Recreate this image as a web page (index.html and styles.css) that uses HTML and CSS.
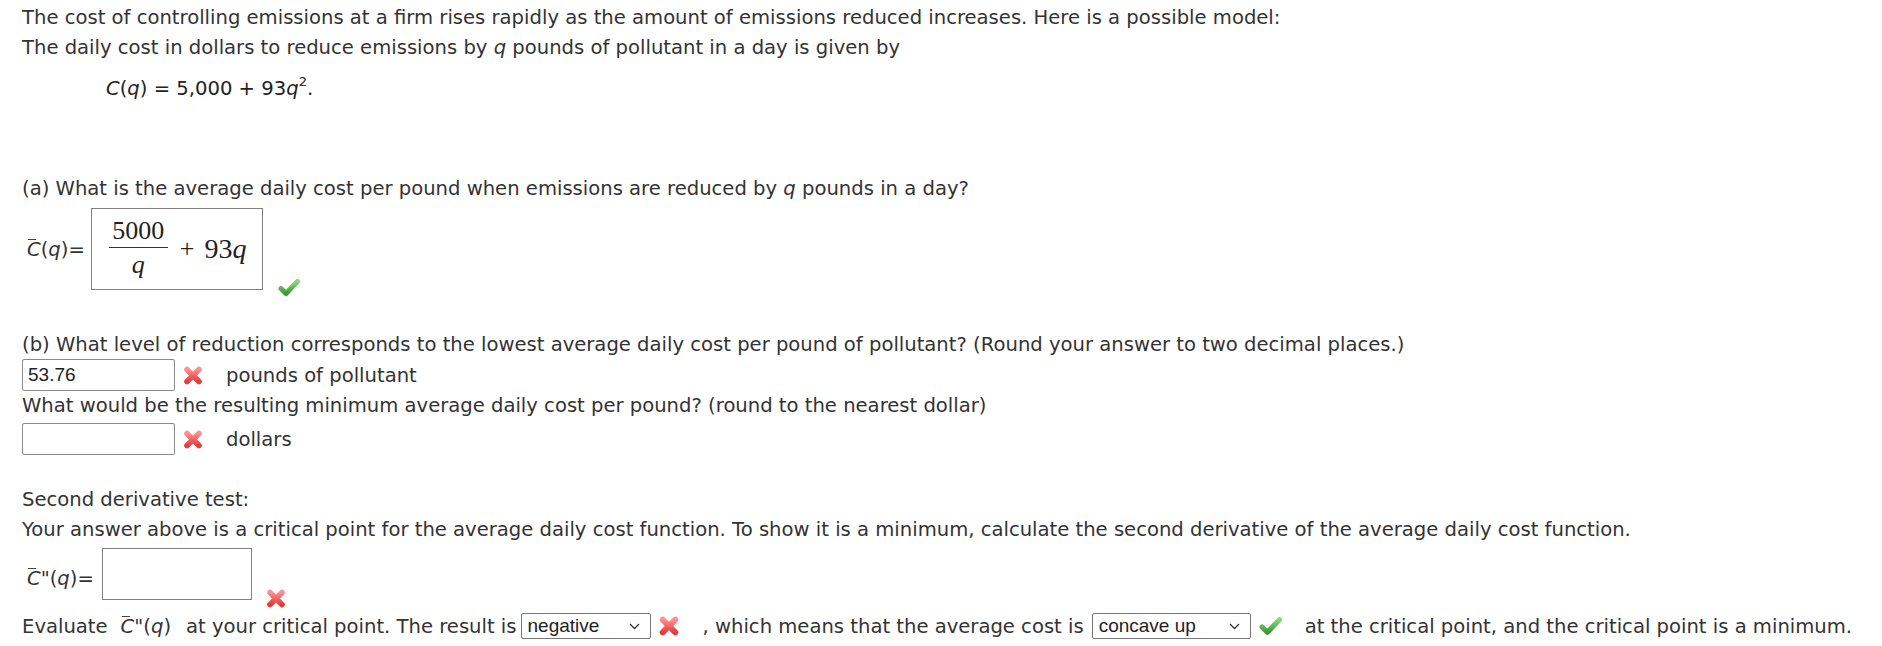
FILE: index.html
```html
<!DOCTYPE html>
<html>
<head>
<meta charset="utf-8">
<link rel="stylesheet" href="styles.css">
</head>
<body>
<div class="page">
  <p class="intro">The cost of controlling emissions at a firm rises rapidly as the amount of emissions reduced increases. Here is a possible model:<br>The daily cost in dollars to reduce emissions by <i>q</i> pounds of pollutant in a day is given by</p>
  <div class="formula"><i>C</i>(<i>q</i>) = 5,000 + 93<i>q</i><sup>2</sup>.</div>

  <p class="line qa">(a) What is the average daily cost per pound when emissions are reduced by <i>q</i> pounds in a day?</p>
  <div class="row-ans">
    <div class="grp grp-a">
      <span class="lbl"><span class="cbar">C</span>(<i>q</i>)=</span>
      <div class="mathbox mathbox-a">
        <span class="frac"><span class="num">5000</span><span class="den"><i>q</i></span></span>
        <span class="plus">+</span><span class="rest">93<i>q</i></span>
      </div>
    </div>
    <svg class="icon check check-a" width="22" height="19" viewBox="0 0 22 19"><defs><linearGradient id="g1" x1="0" y1="0" x2="0" y2="1"><stop offset="0" stop-color="#8ad77d"/><stop offset="1" stop-color="#3d9833"/></linearGradient></defs><polyline points="3,10.5 8,15.5 19.5,3.5" fill="none" stroke="url(#g1)" stroke-width="5" stroke-linecap="round" stroke-linejoin="round"/></svg>
  </div>

  <p class="line qb">(b) What level of reduction corresponds to the lowest average daily cost per pound of pollutant? (Round your answer to two decimal places.)</p>
  <div class="row-input">
    <div class="inbox">53.76</div>
    <svg class="icon cross" width="20" height="19" viewBox="0 0 20 19"><defs><linearGradient id="r1" x1="0" y1="0" x2="0" y2="1"><stop offset="0" stop-color="#ff9090"/><stop offset="1" stop-color="#e53a3a"/></linearGradient></defs><path d="M4 3.5 L16 15.5 M16 3.5 L4 15.5" stroke="url(#r1)" stroke-width="5.6" stroke-linecap="round"/></svg>
    <span class="unit">pounds of pollutant</span>
  </div>
  <p class="line qc">What would be the resulting minimum average daily cost per pound? (round to the nearest dollar)</p>
  <div class="row-input row-input2">
    <div class="inbox"></div>
    <svg class="icon cross" width="20" height="19" viewBox="0 0 20 19"><defs><linearGradient id="r2" x1="0" y1="0" x2="0" y2="1"><stop offset="0" stop-color="#ff9090"/><stop offset="1" stop-color="#e53a3a"/></linearGradient></defs><path d="M4 3.5 L16 15.5 M16 3.5 L4 15.5" stroke="url(#r2)" stroke-width="5.6" stroke-linecap="round"/></svg>
    <span class="unit">dollars</span>
  </div>

  <p class="line sd">Second derivative test:</p>
  <p class="line">Your answer above is a critical point for the average daily cost function. To show it is a minimum, calculate the second derivative of the average daily cost function.</p>
  <div class="row-ans row-c">
    <div class="grp grp-c">
      <span class="lbl"><span class="cbar">C</span>"(<i>q</i>)=</span>
      <div class="mathbox mathbox-c"></div>
    </div>
    <svg class="icon cross cross-c" width="20" height="19" viewBox="0 0 20 19"><defs><linearGradient id="r3" x1="0" y1="0" x2="0" y2="1"><stop offset="0" stop-color="#ff9090"/><stop offset="1" stop-color="#e53a3a"/></linearGradient></defs><path d="M4 3.5 L16 15.5 M16 3.5 L4 15.5" stroke="url(#r3)" stroke-width="5.6" stroke-linecap="round"/></svg>
  </div>
  <div class="row-eval">
    <span>Evaluate</span>
    <span class="expr"><span class="cbar">C</span>"(<i>q</i>)</span>
    <span class="t2">at your critical point. The result is</span>
    <span class="sel sel1"><span>negative</span><svg width="11" height="7" viewBox="0 0 11 7"><polyline points="1,1 5.5,5.5 10,1" fill="none" stroke="#333" stroke-width="1.3"/></svg></span>
    <svg class="icon cross cross-e" width="22" height="20" viewBox="0 0 20 19"><defs><linearGradient id="r4" x1="0" y1="0" x2="0" y2="1"><stop offset="0" stop-color="#ff9090"/><stop offset="1" stop-color="#e53a3a"/></linearGradient></defs><path d="M4 3.5 L16 15.5 M16 3.5 L4 15.5" stroke="url(#r4)" stroke-width="5.6" stroke-linecap="round"/></svg>
    <span class="t3">, which means that the average cost is</span>
    <span class="sel sel2"><span>concave up</span><svg width="11" height="7" viewBox="0 0 11 7"><polyline points="1,1 5.5,5.5 10,1" fill="none" stroke="#333" stroke-width="1.3"/></svg></span>
    <svg class="icon check check-e" width="23" height="20" viewBox="0 0 22 19"><defs><linearGradient id="g2" x1="0" y1="0" x2="0" y2="1"><stop offset="0" stop-color="#8ad77d"/><stop offset="1" stop-color="#3d9833"/></linearGradient></defs><polyline points="3,10.5 8,15.5 19.5,3.5" fill="none" stroke="url(#g2)" stroke-width="5" stroke-linecap="round" stroke-linejoin="round"/></svg>
    <span class="t4">at the critical point, and the critical point is a minimum.</span>
  </div>
</div>
</body>
</html>
```

FILE: styles.css
```css
html, body {
  margin: 0;
  padding: 0;
  background: #fff;
}
body {
  font-family: "DejaVu Sans", Verdana, sans-serif;
  font-size: 19.6px;
  color: #333;
}
.page {
  padding: 3px 0 0 22px;
}
p { margin: 0; }
.intro {
  line-height: 30px;
}
.formula {
  margin-top: 11px;
  line-height: 30px;
  padding-left: 84px;
  color: #222;
}
.formula sup {
  font-size: 13px;
  line-height: 0;
  vertical-align: 9px;
}
.line {
  line-height: 30px;
}
.qa { margin-top: 70px; }
.row-ans {
  display: flex;
  align-items: flex-end;
  margin-top: 4px;
}
.grp {
  display: flex;
  align-items: center;
}
.grp-a { margin-bottom: 7px; }
.lbl {
  margin-left: 5px;
  white-space: nowrap;
}
.cbar {
  position: relative;
  font-style: italic;
}
.cbar::before {
  content: "";
  position: absolute;
  left: 1px;
  top: 1px;
  width: 8px;
  height: 1.5px;
  background: #444;
}
.mathbox {
  border: 1px solid #808080;
  box-sizing: border-box;
  background: #fff;
}
.mathbox-a {
  margin-left: 6px;
  width: 172px;
  height: 82px;
  display: flex;
  align-items: center;
  padding-left: 17px;
  font-family: "Liberation Serif", "Times New Roman", serif;
  font-size: 26px;
  color: #222;
}
.frac {
  display: inline-flex;
  flex-direction: column;
  align-items: center;
  width: 59px;
  margin-bottom: 2px;
}
.num {
  line-height: 26px;
  padding-bottom: 3px;
  border-bottom: 1.3px solid #333;
  width: 100%;
  text-align: center;
}
.den {
  line-height: 26px;
  padding-top: 4px;
}
.plus { margin-left: 12px; }
.rest { margin-left: 10px; font-size: 28px; }
.check-a { margin-left: 15px; }
.qb { margin-top: 34px; line-height: 28px; }
.qc { margin-top: 1px; line-height: 28px; }
.row-input {
  display: flex;
  align-items: center;
  height: 32px;
}
.row-input2 { margin-top: 3px; }
.inbox {
  width: 153px;
  height: 32px;
  box-sizing: border-box;
  border: 1px solid #8a8a8a;
  border-radius: 2px;
  font-family: "Liberation Sans", Arial, sans-serif;
  font-size: 19px;
  line-height: 30px;
  padding-left: 5px;
  color: #222;
}
.cross { margin-left: 8px; }
.unit { margin-left: 23px; }
.sd { margin-top: 30px; }
.row-c { margin-top: 3px; }
.grp-c { margin-bottom: 8px; }
.grp-c .lbl { margin-top: 8px; }
.mathbox-c {
  margin-left: 8px;
  width: 150px;
  height: 52px;
}
.cross-c { margin-left: 14px; }
.row-eval {
  display: flex;
  align-items: center;
  height: 30px;
  margin-top: 3px;
  white-space: nowrap;
}
.expr { margin-left: 13px; }
.t2 { margin-left: 15px; }
.sel {
  display: inline-flex;
  align-items: center;
  justify-content: space-between;
  box-sizing: border-box;
  height: 26px;
  border: 1px solid #767676;
  border-radius: 2px;
  font-family: "Liberation Sans", Arial, sans-serif;
  font-size: 19px;
  color: #222;
  padding: 0 10px 0 6px;
  background: #fff;
}
.sel1 { width: 130px; margin-left: 4px; }
.sel2 { width: 159px; margin-left: 8px; }
.cross-e { margin-left: 7px; }
.t3 { margin-left: 23px; }
.check-e { margin-left: 8px; }
.t4 { margin-left: 23px; }
```
